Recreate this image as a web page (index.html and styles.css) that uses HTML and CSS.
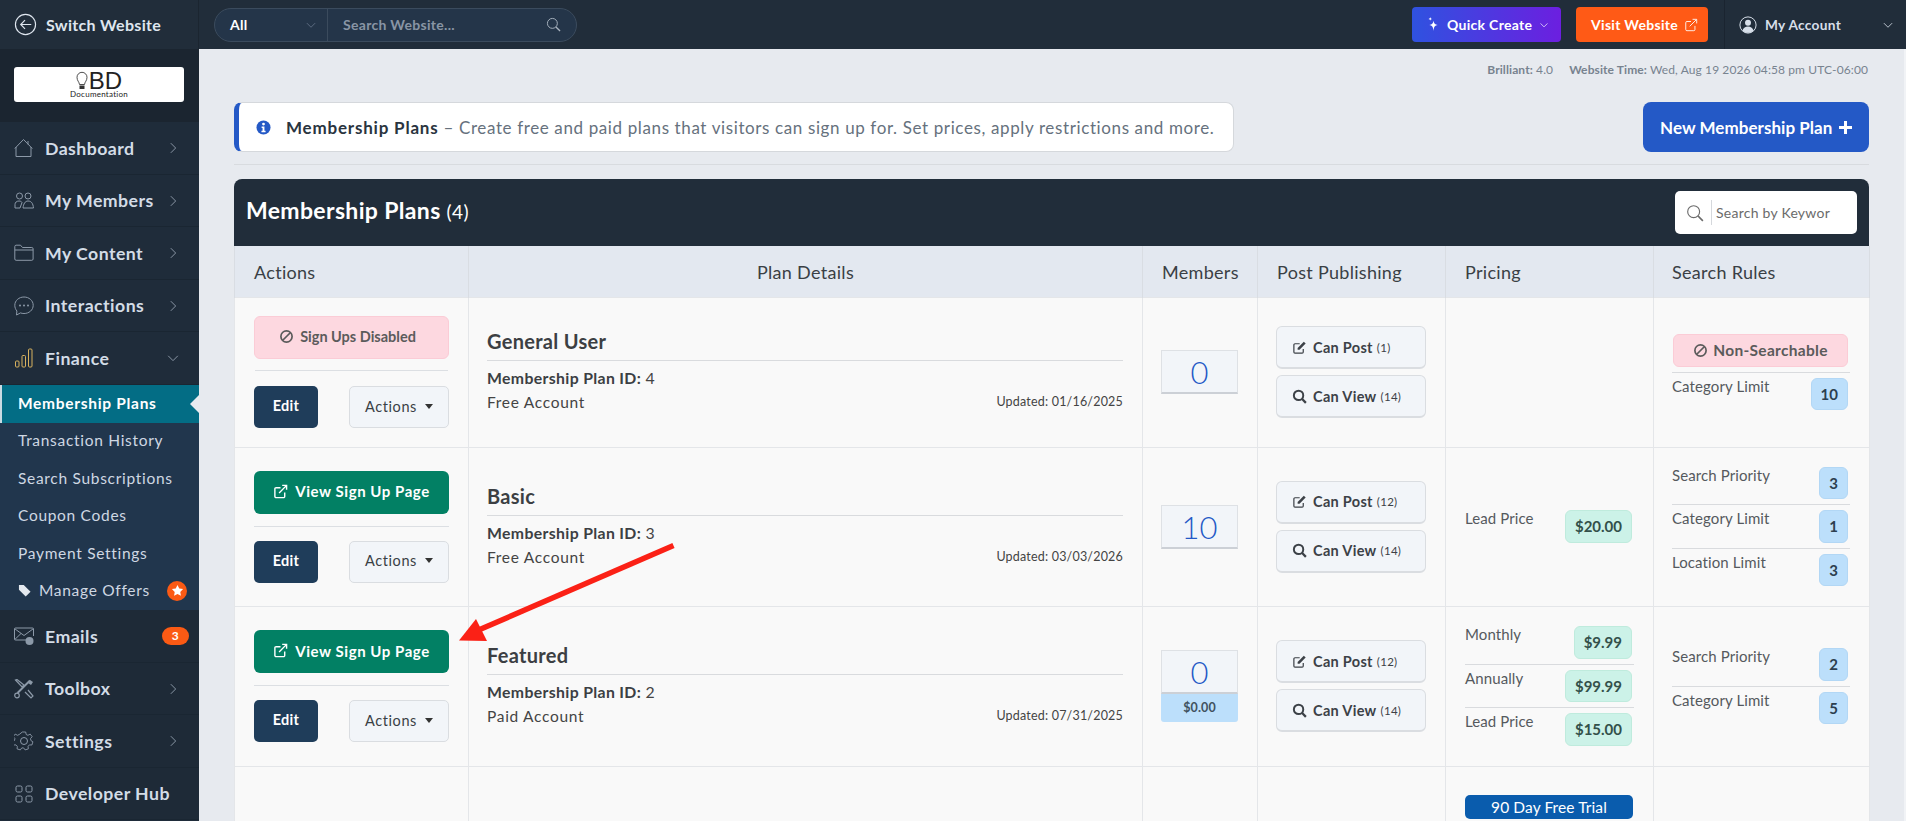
FILE: index.html
```html
<!DOCTYPE html>
<html lang="en">
<head>
<meta charset="UTF-8">
<title>Membership Plans</title>
<link rel="stylesheet" href="styles.css">
</head>
<body>
<svg class="sprite" width="0" height="0">
  <symbol id="i-chev-r" viewBox="0 0 16 16"><path d="M5.500 2.500 11 8l-5.500 5.500" fill="none" stroke="currentColor" stroke-width="1.100"/></symbol>
  <symbol id="i-chev-d" viewBox="0 0 16 16"><path d="M2.500 5.500 8 11l5.500-5.500" fill="none" stroke="currentColor" stroke-width="1.100"/></symbol>
  <symbol id="i-ban" viewBox="0 0 16 16"><circle cx="8" cy="8" r="6" fill="none" stroke="currentColor" stroke-width="1.800"/><path d="M4 12 12 4" stroke="currentColor" stroke-width="1.800"/></symbol>
  <symbol id="i-ext" viewBox="0 0 16 16"><path d="M12.500 9v4.200a1.300 1.300 0 0 1-1.300 1.300H3.300A1.300 1.300 0 0 1 2 13.200V5.300A1.300 1.300 0 0 1 3.300 4H8" fill="none" stroke="currentColor" stroke-width="1.500"/><path d="M6.500 9.500 14 2M9.800 1.500h4.700v4.700" fill="none" stroke="currentColor" stroke-width="1.500"/></symbol>
  <symbol id="i-edit" viewBox="0 0 16 16"><path d="M12 9.500v3.300a1.200 1.200 0 0 1-1.200 1.200H3.200A1.200 1.200 0 0 1 2 12.800V5.200A1.200 1.200 0 0 1 3.200 4h5" fill="none" stroke="currentColor" stroke-width="1.300"/><path d="M6 10.500V8.400L12.600 1.800l2 2L8 10.500z" fill="currentColor"/></symbol>
  <symbol id="i-search" viewBox="0 0 16 16"><circle cx="7" cy="6.800" r="5" fill="none" stroke="currentColor" stroke-width="2.100"/><path d="m10.800 10.600 4 4.200" stroke="currentColor" stroke-width="2.400"/></symbol>
  <symbol id="i-thin-search" viewBox="0 0 16 16"><circle cx="6.800" cy="6.800" r="5.300" fill="none" stroke="currentColor" stroke-width="1"/><path d="m10.600 10.600 4.400 4.400" stroke="currentColor" stroke-width="1.400"/></symbol>
</svg>

<div class="app">
  <aside class="sidebar">
    <div class="switch">
      <svg class="switch-icon" viewBox="0 0 24 24"><circle cx="12" cy="12" r="10.500" fill="none" stroke="currentColor" stroke-width="1.200"/><path d="M18 12H7M11.500 7.500 7 12l4.500 4.500" fill="none" stroke="currentColor" stroke-width="1.200"/></svg>
      <span>Switch Website</span>
    </div>
    <div class="logo-wrap">
      <div class="logo">
        <div class="logo-top">
          <svg class="logo-bulb" viewBox="0 0 12 20"><path d="M3.500 13.500C3.200 10.800 1 9.800 1 6.300a5 5 0 0 1 10 0c0 3.500-2.200 4.500-2.500 7.200z" fill="none" stroke="#222" stroke-width=".8"/><path d="M3.500 14.500h5v3.500h-5z" fill="#333"/></svg>
          <span class="logo-bd">BD</span>
        </div>
        <div class="logo-sub">Documentation</div>
      </div>
    </div>
    <nav class="nav">
      <div class="nav-item">
        <svg class="nav-icon" viewBox="0 0 20 20"><path d="M2 9v9.500h15V9M.8 10.500 9.500 1.500l8.800 9M14 3v3.500" fill="none" stroke="currentColor" stroke-width="1"/></svg>
        <span class="nav-label">Dashboard</span>
        <svg class="nav-chev"><use href="#i-chev-r"/></svg>
      </div>
      <div class="nav-item">
        <svg class="nav-icon" viewBox="0 0 20 20"><circle cx="5.500" cy="5" r="3" fill="none" stroke="currentColor"/><circle cx="14" cy="5" r="3" fill="none" stroke="currentColor"/><path d="M1 17v-3.500c0-2 1.500-3.500 4-3.500 1.500 0 2.500.5 3 1.500L6 17zM9 17c.5-4 2-7 5-7 3.500 0 5 2.500 5.500 7z" fill="none" stroke="currentColor"/></svg>
        <span class="nav-label">My Members</span>
        <svg class="nav-chev"><use href="#i-chev-r"/></svg>
      </div>
      <div class="nav-item">
        <svg class="nav-icon" viewBox="0 0 20 20"><path d="M.8 6V3.500c0-.8.500-1.300 1.300-1.300h4.400l2 2.300h9.300c.8 0 1.300.5 1.300 1.300V16c0 .8-.5 1.300-1.300 1.300H2.100C1.300 17.300.8 16.800.8 16zM.8 7h18.400" fill="none" stroke="currentColor"/></svg>
        <span class="nav-label">My Content</span>
        <svg class="nav-chev"><use href="#i-chev-r"/></svg>
      </div>
      <div class="nav-item">
        <svg class="nav-icon" viewBox="0 0 20 20"><path d="M10 1c5 0 9.200 3.500 9.200 8.300S15 17.500 10 17.500c-1.400 0-2.500-.2-3.500-.6L2.500 19l.4-4C1.600 13.500.8 11.500.8 9.300.8 4.500 5 1 10 1z" fill="none" stroke="currentColor"/><circle cx="6" cy="9.500" r="1" fill="currentColor"/><circle cx="10" cy="9.500" r="1" fill="currentColor"/><circle cx="14" cy="9.500" r="1" fill="currentColor"/></svg>
        <span class="nav-label">Interactions</span>
        <svg class="nav-chev"><use href="#i-chev-r"/></svg>
      </div>
      <div class="nav-item">
        <svg class="nav-icon gold" viewBox="0 0 20 20"><rect x="1.500" y="13" width="3.500" height="6" rx="1" fill="none" stroke="currentColor"/><rect x="8" y="7.500" width="3.500" height="11.500" rx="1" fill="none" stroke="currentColor"/><rect x="14.500" y="1" width="3.500" height="18" rx="1" fill="none" stroke="currentColor"/></svg>
        <span class="nav-label">Finance</span>
        <svg class="nav-chev"><use href="#i-chev-d"/></svg>
      </div>
      <div class="subnav">
        <div class="sub-item active">Membership Plans</div>
        <div class="sub-item">Transaction History</div>
        <div class="sub-item">Search Subscriptions</div>
        <div class="sub-item">Coupon Codes</div>
        <div class="sub-item">Payment Settings</div>
        <div class="sub-item">
          <svg class="offer-tag" viewBox="0 0 14 14"><path d="M1 1h5.200L13.500 8.300 8.300 13.500 1 6.200z" fill="currentColor"/></svg>
          <span>Manage Offers</span>
          <span class="offer-star"><svg viewBox="0 0 14 14"><path d="m7 1 1.900 3.900 4.100.6-3 3 .7 4.200L7 10.700l-3.700 2 .7-4.200-3-3 4.100-.6z" fill="#fff"/></svg></span>
        </div>
      </div>
      <div class="nav-item dark">
        <svg class="nav-icon" viewBox="0 0 20 20"><path d="M14 14H1.500a1 1 0 0 1-1-1V3a1 1 0 0 1 1-1h17a1 1 0 0 1 1 1v7M.8 2.800 10 9.500l9.200-6.700M.8 13.500 7 7.500" fill="none" stroke="currentColor"/><circle cx="15.500" cy="15" r="4" fill="currentColor"/></svg>
        <span class="nav-label">Emails</span>
        <span class="nav-badge">3</span>
      </div>
      <div class="nav-item dark">
        <svg class="nav-icon" viewBox="0 0 20 20"><path d="M1.500 1 8 8l2-2L3 .500zM14 11l5 6-2 2-6-6" fill="none" stroke="currentColor" stroke-width="1.200"/><path d="M16 1.500 3.500 14" stroke="currentColor" stroke-width="2"/><circle cx="3" cy="16.500" r="2.300" fill="none" stroke="currentColor" stroke-width="1.200"/><path d="M14 4l2-3 3 2-2 3z" fill="currentColor"/></svg>
        <span class="nav-label">Toolbox</span>
        <svg class="nav-chev"><use href="#i-chev-r"/></svg>
      </div>
      <div class="nav-item dark">
        <svg class="nav-icon" viewBox="0 0 20 20"><circle cx="10" cy="10" r="3.500" fill="none" stroke="currentColor"/><path d="M8.300 1h3.400l.5 2.500 1.700.8 2.300-1.200 2 2.600-1.700 1.900.4 1.900 2 1.300-1 3.200-2.500-.1-1.300 1.400.2 2.600-3.200 1-1.500-2h-1.800l-1.500 2-3.200-1 .2-2.600-1.300-1.400-2.500.1-1-3.200 2-1.300.4-1.900-1.700-1.900 2-2.600 2.300 1.200 1.700-.8z" fill="none" stroke="currentColor" stroke-width=".9"/></svg>
        <span class="nav-label">Settings</span>
        <svg class="nav-chev"><use href="#i-chev-r"/></svg>
      </div>
      <div class="nav-item dark">
        <svg class="nav-icon" viewBox="0 0 20 20"><rect x="2" y="2" width="6" height="6" rx="1.500" fill="none" stroke="currentColor"/><rect x="12" y="2" width="6" height="6" rx="1.500" fill="none" stroke="currentColor"/><rect x="2" y="12" width="6" height="6" rx="1.500" fill="none" stroke="currentColor"/><rect x="12" y="12" width="6" height="6" rx="1.500" fill="none" stroke="currentColor"/></svg>
        <span class="nav-label">Developer Hub</span>
      </div>
    </nav>
  </aside>

  <div class="content">
    <header class="topbar">
      <div class="site-search">
        <div class="search-scope">
          <span>All</span>
          <svg class="scope-chev"><use href="#i-chev-d"/></svg>
        </div>
        <div class="search-field">
          <span>Search Website...</span>
          <svg class="field-icon"><use href="#i-thin-search"/></svg>
        </div>
      </div>
      <div class="top-actions">
        <div class="btn-quick">
          <svg class="spark" viewBox="0 0 14 16"><path d="M7 4c.5 3 1.500 4 4.500 4.500C8.500 9 7.500 10 7 15c-.5-5-1.500-6-4.500-6.500C5.500 8 6.500 7 7 4zM3.500 0c.2 1.300.7 1.800 2 2-1.300.2-1.800.7-2 2-.2-1.300-.7-1.800-2-2 1.300-.2 1.800-.7 2-2z" fill="#fff"/></svg>
          <span>Quick Create</span>
          <svg class="quick-chev"><use href="#i-chev-d"/></svg>
        </div>
        <div class="btn-visit">
          <span>Visit Website</span>
          <svg class="visit-icon" viewBox="0 0 16 16"><path d="M12.500 9v4.200a1.300 1.300 0 0 1-1.300 1.300H3.300A1.300 1.300 0 0 1 2 13.200V5.300A1.300 1.300 0 0 1 3.300 4H8M6.500 9.500 14 2M9.800 1.500h4.700v4.700" fill="none" stroke="currentColor"/></svg>
        </div>
      </div>
      <div class="account">
        <svg class="account-icon" viewBox="0 0 20 20"><circle cx="10" cy="10" r="9" fill="none" stroke="currentColor" stroke-width="1.100"/><circle cx="10" cy="7.500" r="3.300" fill="currentColor"/><path d="M3.800 16c1-3 3.500-4.300 6.200-4.300s5.200 1.300 6.200 4.300c-3.500 3.500-9 3.500-12.400 0z" fill="currentColor"/></svg>
        <span class="account-name">My Account</span>
        <svg class="account-chev"><use href="#i-chev-d"/></svg>
      </div>
    </header>

    <main class="main">
      <div class="meta">
        <span><b>Brilliant:</b> 4.0</span>
        <span><b>Website Time:</b> Wed, Aug 19 2026 04:58 pm UTC-06:00</span>
      </div>

      <div class="page-head">
        <div class="intro">
          <svg class="intro-icon" viewBox="0 0 16 16"><circle cx="8" cy="8" r="7.500" fill="currentColor"/><circle cx="8" cy="4.300" r="1.500" fill="#fff"/><path d="M6 7h3v4.500h1.200V13H5.800v-1.500H7V8.400H6z" fill="#fff"/></svg>
          <span class="intro-text"><b>Membership Plans</b> &ndash; Create free and paid plans that visitors can sign up for. Set prices, apply restrictions and more.</span>
        </div>
        <div class="btn-new">New Membership Plan <span class="plus"></span></div>
      </div>

      <section class="card">
        <div class="card-head">
          <h1>Membership Plans <small>(4)</small></h1>
          <div class="keyword">
            <svg class="keyword-icon"><use href="#i-thin-search"/></svg>
            <span class="keyword-text">Search by Keywor</span>
          </div>
        </div>
        <table class="plans">
          <colgroup>
            <col class="col-actions"><col class="col-details"><col class="col-members"><col class="col-post"><col class="col-pricing"><col class="col-rules">
          </colgroup>
          <thead>
            <tr>
              <th>Actions</th>
              <th class="center">Plan Details</th>
              <th class="center">Members</th>
              <th>Post Publishing</th>
              <th>Pricing</th>
              <th>Search Rules</th>
            </tr>
          </thead>
          <tbody>
            <tr class="row-a">
              <td>
                <div class="btn-wide disabled"><svg class="i15"><use href="#i-ban"/></svg>Sign Ups Disabled</div>
                <div class="action-row">
                  <span class="btn-edit">Edit</span>
                  <span class="btn-actions">Actions <i class="caret"></i></span>
                </div>
              </td>
              <td>
                <div class="plan">
                  <h2>General User</h2>
                  <div class="plan-id"><b>Membership Plan ID:</b> 4</div>
                  <div class="plan-foot"><span>Free Account</span><small>Updated: 01/16/2025</small></div>
                </div>
              </td>
              <td><div class="count">0</div></td>
              <td>
                <div class="post-btn"><svg class="i13"><use href="#i-edit"/></svg>Can Post <small>(1)</small></div>
                <div class="post-btn"><svg class="i13"><use href="#i-search"/></svg>Can View <small>(14)</small></div>
              </td>
              <td></td>
              <td>
                <div class="non-search"><svg class="i15"><use href="#i-ban"/></svg>Non-Searchable</div>
                <div class="kv"><span>Category Limit</span><span class="tag blue">10</span></div>
              </td>
            </tr>
            <tr class="row-b">
              <td>
                <div class="btn-wide signup"><svg class="i15"><use href="#i-ext"/></svg>View Sign Up Page</div>
                <div class="action-row">
                  <span class="btn-edit">Edit</span>
                  <span class="btn-actions">Actions <i class="caret"></i></span>
                </div>
              </td>
              <td>
                <div class="plan">
                  <h2>Basic</h2>
                  <div class="plan-id"><b>Membership Plan ID:</b> 3</div>
                  <div class="plan-foot"><span>Free Account</span><small>Updated: 03/03/2026</small></div>
                </div>
              </td>
              <td><div class="count">10</div></td>
              <td>
                <div class="post-btn"><svg class="i13"><use href="#i-edit"/></svg>Can Post <small>(12)</small></div>
                <div class="post-btn"><svg class="i13"><use href="#i-search"/></svg>Can View <small>(14)</small></div>
              </td>
              <td>
                <div class="kv"><span>Lead Price</span><span class="tag green">$20.00</span></div>
              </td>
              <td>
                <div class="kv"><span>Search Priority</span><span class="tag blue">3</span></div>
                <div class="kv"><span>Category Limit</span><span class="tag blue">1</span></div>
                <div class="kv"><span>Location Limit</span><span class="tag blue">3</span></div>
              </td>
            </tr>
            <tr class="row-c">
              <td>
                <div class="btn-wide signup"><svg class="i15"><use href="#i-ext"/></svg>View Sign Up Page</div>
                <div class="action-row">
                  <span class="btn-edit">Edit</span>
                  <span class="btn-actions">Actions <i class="caret"></i></span>
                </div>
              </td>
              <td>
                <div class="plan">
                  <h2>Featured</h2>
                  <div class="plan-id"><b>Membership Plan ID:</b> 2</div>
                  <div class="plan-foot"><span>Paid Account</span><small>Updated: 07/31/2025</small></div>
                </div>
              </td>
              <td>
                <div class="count">0</div>
                <div class="count-sub">$0.00</div>
              </td>
              <td>
                <div class="post-btn"><svg class="i13"><use href="#i-edit"/></svg>Can Post <small>(12)</small></div>
                <div class="post-btn"><svg class="i13"><use href="#i-search"/></svg>Can View <small>(14)</small></div>
              </td>
              <td>
                <div class="kv"><span>Monthly</span><span class="tag green">$9.99</span></div>
                <div class="kv"><span>Annually</span><span class="tag green">$99.99</span></div>
                <div class="kv"><span>Lead Price</span><span class="tag green">$15.00</span></div>
              </td>
              <td>
                <div class="kv"><span>Search Priority</span><span class="tag blue">2</span></div>
                <div class="kv"><span>Category Limit</span><span class="tag blue">5</span></div>
              </td>
            </tr>
            <tr class="row-d">
              <td></td><td></td><td></td><td></td>
              <td><div class="trial">90 Day Free Trial</div></td>
              <td></td>
            </tr>
          </tbody>
        </table>
      </section>
    </main>
  </div>
</div>

<svg class="arrow" viewBox="0 0 1906 821">
  <path d="M673.500 545.500 474 632" fill="none" stroke="#fb2116" stroke-width="5.500"/>
  <path d="M476 619 487 641 459 640.500z" fill="#fb2116"/>
</svg>
</body>
</html>
```

FILE: styles.css
```css
* {
  box-sizing: border-box;
}

html, body {
  margin: 0;
  height: 100%;
  overflow: hidden;
}

body {
  font-family: "Lato", "Noto Sans", sans-serif;
  font-size: 15px;
  letter-spacing: 0.3px;
  color: #444;
  background: #e7eaef;
}

.sprite {
  position: absolute;
}

.app {
  display: flex;
  height: 821px;
}

/* sidebar */
.sidebar {
  width: 199px;
  flex: none;
  background: #1f2c3a;
  color: #d7dfe9;
}

.switch {
  height: 49px;
  display: flex;
  align-items: center;
  padding-left: 14px;
  gap: 9px;
  font-size: 16px;
  font-weight: 700;
  color: #dfe6ef;
  background: #212d3a;
  border-right: 1px solid #1b2530;
}

.switch-icon {
  width: 23px;
  height: 23px;
}

.logo-wrap {
  height: 73px;
  padding: 18px 14px 0 14px;
  background: #1b2530;
}

.logo {
  width: 170px;
  height: 35px;
  background: #fff;
  border-radius: 3px;
  color: #222;
  text-align: center;
}

.logo-top {
  height: 23px;
  display: flex;
  justify-content: center;
  gap: 1px;
  padding-top: 4px;
}

.logo-bulb {
  width: 12px;
  height: 20px;
}

.logo-bd {
  font: 300 24px/19px "Liberation Sans", sans-serif;
  letter-spacing: 0;
}

.logo-sub {
  font-size: 8px;
  line-height: 9px;
  letter-spacing: 0.25px;
}

.nav-item {
  height: 52.500px;
  display: flex;
  align-items: center;
  padding: 1px 0 0 14px;
  border-bottom: 1px solid #1a2632;
  position: relative;
}

.nav-item.dark {
  background: #1e2a37;
}

.nav-icon {
  width: 20px;
  height: 20px;
  color: #8c99a8;
  flex: none;
}

.nav-icon.gold {
  color: #d8b25e;
}

.nav-label {
  margin-left: 11px;
  font-size: 17.700px;
  font-weight: 700;
  letter-spacing: 0.45px;
  color: #d3dce6;
}

.nav-chev {
  position: absolute;
  left: 166px;
  top: 19px;
  width: 14px;
  height: 14px;
  color: #8c99a8;
}

.nav-badge {
  position: absolute;
  left: 162px;
  top: 17px;
  width: 27px;
  height: 18px;
  border-radius: 9px;
  background: #fb5a14;
  color: #fff;
  font-size: 12px;
  font-weight: 700;
  line-height: 18px;
  text-align: center;
}

.subnav {
  background: #21364d;
}

.sub-item {
  height: 37.500px;
  display: flex;
  align-items: center;
  padding: 0 0 2px 18px;
  font-size: 15.500px;
  letter-spacing: 0.7px;
  color: #cfd8e3;
  position: relative;
}

.sub-item.active {
  height: 38px;
  background: #036d85;
  border-left: 2px solid #c9dbe3;
  padding-left: 16px;
  font-weight: 700;
  color: #fff;
}

.sub-item.active::after {
  content: "";
  position: absolute;
  right: 0;
  top: 10px;
  border-style: solid;
  border-width: 9px 9px 9px 0;
  border-color: transparent #e7eaef transparent transparent;
}

.offer-tag {
  width: 13px;
  height: 13px;
  margin-right: 8px;
  color: #e4e9ef;
}

.offer-star {
  position: absolute;
  left: 167px;
  top: 8px;
  width: 20px;
  height: 20px;
  border-radius: 50%;
  background: #fb5a14;
  display: flex;
  align-items: center;
  justify-content: center;
}

.offer-star svg {
  width: 13px;
  height: 13px;
}

/* top bar */
.content {
  flex: 1;
  display: flex;
  flex-direction: column;
  min-width: 0;
}

.topbar {
  height: 49px;
  flex: none;
  background: #212d3a;
  display: flex;
  align-items: center;
  padding-left: 15px;
  color: #fff;
}

.site-search {
  width: 363px;
  height: 34px;
  display: flex;
  background: #243549;
  border: 1px solid #3b4b5d;
  border-radius: 17px;
}

.search-scope {
  width: 113px;
  display: flex;
  align-items: center;
  justify-content: space-between;
  padding: 0 10px 0 15px;
  border-right: 1px solid #3b4b5d;
  font-size: 14px;
  font-weight: 700;
}

.scope-chev {
  width: 12px;
  height: 12px;
  color: #66758a;
}

.search-field {
  flex: 1;
  display: flex;
  align-items: center;
  justify-content: space-between;
  padding: 0 15px;
  font-size: 14px;
  font-weight: 700;
  color: #8995a5;
}

.field-icon {
  width: 15px;
  height: 15px;
  color: #aab4c0;
}

.top-actions {
  margin-left: auto;
  display: flex;
  gap: 15px;
  padding-right: 16px;
}

.btn-quick {
  width: 149px;
  height: 35px;
  border-radius: 4px;
  background: linear-gradient(90deg, #2f52e0, #6c1fe0);
  display: flex;
  align-items: center;
  padding-left: 15px;
  font-size: 14px;
  font-weight: 700;
}

.spark {
  width: 13px;
  height: 15px;
  margin-right: 7px;
}

.quick-chev {
  width: 10px;
  height: 10px;
  margin-left: 7px;
}

.btn-visit {
  width: 132px;
  height: 35px;
  border-radius: 4px;
  background: #ff5a16;
  display: flex;
  align-items: center;
  padding-left: 15px;
  font-size: 14px;
  font-weight: 700;
}

.visit-icon {
  width: 14px;
  height: 14px;
  margin-left: 6px;
}

.account {
  width: 182px;
  height: 49px;
  flex: none;
  border-left: 1px solid #1a2430;
  display: flex;
  align-items: center;
  padding-left: 14px;
  font-size: 13.700px;
  font-weight: 700;
  color: #d7dfe9;
}

.account-icon {
  width: 18px;
  height: 18px;
}

.account-name {
  margin-left: 8px;
}

.account-chev {
  width: 12px;
  height: 12px;
  margin-left: 41px;
}

/* main */
.main {
  flex: 1;
  padding: 0 35px;
  min-height: 0;
  overflow: hidden;
  border-right: 2px solid #f1f3f6;
}

.meta {
  height: 53px;
  padding: 13px 0 0;
  display: flex;
  justify-content: flex-end;
  gap: 16px;
  font-size: 12px;
  line-height: 16px;
  letter-spacing: 0.1px;
  color: #78838f;
  margin-right: 1px;
}

.page-head {
  display: flex;
  justify-content: space-between;
  padding-bottom: 12px;
  border-bottom: 1px solid #d8dbdf;
  margin-bottom: 14px;
}

.intro {
  width: 1000px;
  height: 50px;
  display: flex;
  align-items: center;
  background: #fff;
  border: 1px solid #d5d8dc;
  border-left: 5px solid #2459c6;
  border-radius: 8px;
  padding-left: 17px;
}

.intro-icon {
  width: 15px;
  height: 15px;
  color: #2459c6;
  flex: none;
}

.intro-text {
  margin-left: 15px;
  font-size: 17px;
  letter-spacing: 0.62px;
  color: #66717d;
}

.intro-text b {
  font-weight: 700;
  letter-spacing: 0.8px;
  color: #2a3440;
}

.btn-new {
  width: 226px;
  height: 50px;
  display: flex;
  align-items: center;
  padding-left: 17px;
  background: #2459c6;
  border-radius: 8px;
  color: #fff;
  font-size: 17px;
  font-weight: 700;
  letter-spacing: 0.05px;
}

.plus {
  width: 13px;
  height: 13px;
  margin-left: 7px;
  background:
    linear-gradient(#fff, #fff) center / 13px 3px no-repeat,
    linear-gradient(#fff, #fff) center / 3px 13px no-repeat;
}

.card-head {
  height: 67px;
  background: #212d3a;
  border-radius: 8px 8px 0 0;
  display: flex;
  align-items: center;
  justify-content: space-between;
  padding: 0 12px;
  color: #fff;
}

.card-head h1 {
  margin: 0 0 5px;
  font-size: 23px;
  font-weight: 700;
  letter-spacing: 0.35px;
}

.card-head small {
  font-size: 19px;
  font-weight: 400;
}

.keyword {
  width: 182px;
  height: 43px;
  background: #fff;
  border-radius: 5px;
  display: flex;
  align-items: center;
  color: #6b6b6b;
}

.keyword-icon {
  width: 18px;
  height: 18px;
  margin-left: 11px;
}

.keyword-text {
  margin-left: 7px;
  padding-left: 4px;
  height: 25px;
  line-height: 25px;
  border-left: 1px solid #d5d8dc;
  font-size: 14px;
  letter-spacing: 0.25px;
}

/* table */
.plans {
  width: 1635px;
  table-layout: fixed;
  border-collapse: collapse;
  background: #f9f9f9;
}

.col-actions { width: 234px; }
.col-details { width: 674px; }
.col-members { width: 115px; }
.col-post { width: 188px; }
.col-pricing { width: 208px; }
.col-rules { width: 216px; }

.plans th {
  height: 51px;
  background: #e3e8f0;
  border: 1px solid #d9dde3;
  border-top: 0;
  border-bottom: 0;
  padding: 2px 19px 0;
  text-align: left;
  font-size: 18px;
  font-weight: 400;
  letter-spacing: 0.3px;
  color: #3a3f45;
}

.plans th.center {
  text-align: center;
}

.plans th:nth-child(6) {
  padding-left: 18px;
}

.plans td {
  border: 1px solid #e4e6e9;
  padding: 0 19px;
  vertical-align: middle;
}

.plans td:nth-child(2) {
  padding: 0 19px 0 18px;
}

.plans td:nth-child(3),
.plans td:nth-child(4) {
  padding: 0 20px 0 18px;
}

.plans td:nth-child(6) {
  padding-left: 18px;
}

.row-a { height: 150px; }
.row-b { height: 159px; }
.row-c { height: 160px; }
.row-d { height: 60px; }

.row-d td {
  vertical-align: top;
  padding-top: 28px;
}

.btn-wide {
  height: 43px;
  display: flex;
  align-items: center;
  justify-content: center;
  gap: 6px;
  padding-bottom: 2px;
  border-radius: 6px;
  font-weight: 700;
  margin-bottom: 12px;
  position: relative;
}

.btn-wide::after {
  content: "";
  position: absolute;
  left: 0;
  right: 0;
  bottom: -13px;
  border-bottom: 1px solid #dcdfe3;
}

.disabled {
  background: #fdd8e0;
  border: 1px solid #fbccd6;
  color: #5b5b5b;
  font-size: 14.500px;
  letter-spacing: 0;
  padding-right: 8px;
}

.signup {
  background: #028064;
  color: #fff;
  font-size: 15px;
  letter-spacing: 0.55px;
}

.signup .i15 {
  margin-right: 1px;
}

.i15 {
  width: 15px;
  height: 15px;
  flex: none;
}

.i13 {
  width: 15px;
  height: 15px;
  flex: none;
  margin-right: 6px;
}

.action-row {
  display: flex;
  justify-content: space-between;
  margin-top: 27px;
}

.btn-edit {
  width: 64px;
  height: 42px;
  line-height: 40px;
  text-align: center;
  background: #1f3d5a;
  border-radius: 5px;
  color: #fff;
  font-weight: 700;
  font-size: 14.500px;
}

.btn-actions {
  width: 100px;
  height: 42px;
  display: flex;
  align-items: center;
  justify-content: center;
  gap: 8px;
  padding-bottom: 2px;
  background: #f2f5f9;
  border: 1px solid #dadde1;
  border-radius: 5px;
  color: #3a3f45;
  font-size: 14.500px;
  letter-spacing: 0.6px;
}

.caret {
  border-style: solid;
  border-width: 5px 4.500px 0 4.500px;
  border-color: #333 transparent transparent transparent;
}

.plan {
  height: 84px;
}

.plan h2 {
  margin: 0 0 6px;
  height: 31px;
  line-height: 22px;
  border-bottom: 1px solid #d9dbde;
  font-size: 20px;
  font-weight: 700;
  letter-spacing: 0.3px;
  color: #3c3f43;
}

.plan-id {
  height: 24px;
  line-height: 22px;
  font-size: 15.800px;
  letter-spacing: 0.35px;
}

.plan-id b {
  color: #3c3f43;
}

.plan-foot {
  display: flex;
  justify-content: space-between;
  align-items: center;
  line-height: 22px;
  font-size: 15.500px;
  letter-spacing: 0.7px;
}

.plan-foot small {
  font-size: 12.500px;
  letter-spacing: 0.2px;
}

.count {
  width: 77px;
  height: 44px;
  margin: 0 auto;
  line-height: 42px;
  text-align: center;
  background: #f2f5f9;
  border: 1px solid #dee1e5;
  border-bottom: 2px solid #ccd0d6;
  font-size: 31px;
  font-weight: 300;
  letter-spacing: 0;
  color: #2459c6;
}

.count-sub {
  width: 77px;
  height: 28px;
  margin: 0 auto;
  line-height: 28px;
  text-align: center;
  background: #bcdffb;
  border-radius: 0 0 3px 3px;
  font-size: 12.500px;
  font-weight: 700;
  letter-spacing: 0.1px;
  color: #41525f;
}

.post-btn {
  width: 150px;
  height: 43px;
  margin: 0 auto 6px;
  display: flex;
  align-items: center;
  padding-left: 15px;
  background: #f2f5f9;
  border: 1px solid #dadde1;
  border-bottom-width: 2px;
  border-radius: 6px;
  font-size: 14.500px;
  font-weight: 700;
  color: #3c4147;
}

.post-btn:last-child {
  margin-bottom: 0;
}

.post-btn small {
  font-size: 11.500px;
  font-weight: 400;
  margin-left: 4px;
}

.kv {
  display: flex;
  justify-content: space-between;
  align-items: flex-start;
  padding-bottom: 5px;
  margin-bottom: 5px;
  border-bottom: 1px solid #d9dbde;
  font-size: 15px;
  line-height: 16px;
  letter-spacing: 0.1px;
  color: #55595e;
}

.kv:last-child {
  padding-bottom: 0;
  margin-bottom: 0;
  border-bottom: 0;
}

.kv .tag {
  margin-right: 2px;
}

.tag {
  height: 32.500px;
  line-height: 31px;
  padding: 0 9px;
  border-radius: 6px;
  font-size: 15px;
  font-weight: 700;
  letter-spacing: 0;
}

.tag.green {
  background: #ccf2e8;
  border: 1px solid #bfebdd;
  color: #33504a;
}

.tag.blue {
  background: #bcdffb;
  border: 1px solid #b2d7f5;
  color: #2d3f4f;
}

.non-search {
  height: 33px;
  margin: 0 2px 5px 1px;
  display: flex;
  align-items: center;
  justify-content: center;
  gap: 5px;
  background: #fdd8e0;
  border: 1px solid #fbccd6;
  border-radius: 6px;
  font-size: 15.500px;
  font-weight: 700;
  color: #5b5b5b;
}

.non-search + .kv {
  border-top: 1px solid #d9dbde;
  padding-top: 5px;
  margin-bottom: 0;
}

.trial {
  height: 24px;
  line-height: 24px;
  margin-right: 1px;
  text-align: center;
  background: #0a5cad;
  border-radius: 5px;
  color: #fff;
  font-size: 15.500px;
  letter-spacing: 0.1px;
}

.arrow {
  position: absolute;
  left: 0;
  top: 0;
  width: 1906px;
  height: 821px;
  pointer-events: none;
}
```
